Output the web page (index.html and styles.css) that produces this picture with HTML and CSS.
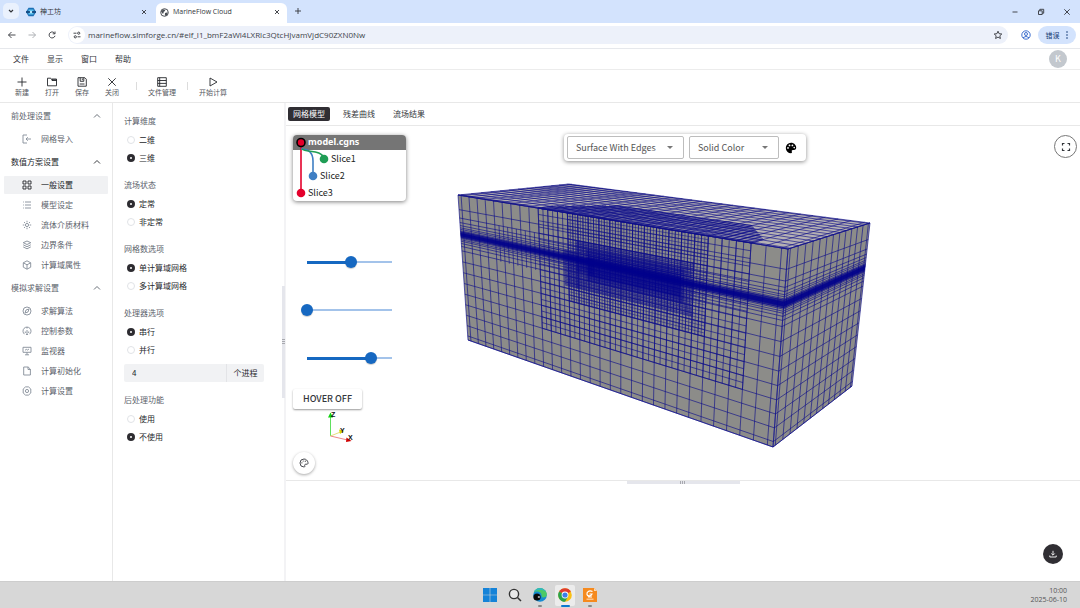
FILE: index.html
```html
<!DOCTYPE html>
<html lang="zh-CN">
<head>
<meta charset="utf-8">
<title>MarineFlow Cloud</title>
<link rel="stylesheet" href="styles.css">
</head>
<body>
<header class="browser">
  <div class="tabstrip">
    <button class="tab-search" aria-label="搜索标签页"><svg width="8" height="8" viewBox="0 0 8 8"><path d="M2 3l2 2 2-2" class="ln bold"/></svg></button>
    <div class="btab">
      <svg width="10" height="10" viewBox="0 0 10 10"><path d="M2.5 .8h5L10 5 7.500 9.200h-5L0 5z" fill="#1d6fb5"/><path d="M0 4h10v2H0z" fill="#164f86"/><path d="M2.500 2.500h5v1.500h-5zM2.500 6h5v1.500h-5z" fill="#5cc3ee"/><circle cx="5" cy="5" r="1.200" fill="#bfeaff"/></svg>
      <span class="btab-title">神工坊</span>
      <button class="x" aria-label="关闭标签页"><svg width="6" height="6" viewBox="0 0 6 6"><path d="M1 1l4 4M5 1L1 5" class="ln"/></svg></button>
    </div>
    <div class="btab active">
      <svg width="9" height="9" viewBox="0 0 9 9"><circle cx="4.500" cy="4.500" r="3.800" fill="#fff" stroke="#4b4f55"/><path d="M1 3.500l2-2 2.500.2-.8 1.600-1.200.8.300 1.200-1.500.2zM5 5l2.800-.8L7 7 4.800 8z" fill="#4b4f55"/></svg>
      <span class="btab-title">MarineFlow Cloud</span>
      <button class="x" aria-label="关闭标签页"><svg width="6" height="6" viewBox="0 0 6 6"><path d="M1 1l4 4M5 1L1 5" class="ln"/></svg></button>
    </div>
    <button class="newtab" aria-label="新标签页"><svg width="8" height="8" viewBox="0 0 8 8"><path d="M4 1v6M1 4h6" class="ln"/></svg></button>
    <div class="winctl">
      <button aria-label="最小化"><svg width="8" height="8" viewBox="0 0 8 8"><path d="M1.500 4h5" class="ln"/></svg></button>
      <button aria-label="还原"><svg width="8" height="8" viewBox="0 0 8 8"><path d="M1.500 2.800h3.700v3.700H1.500zM2.800 2.800V1.300h3.900v3.900H5.200" class="ln"/></svg></button>
      <button aria-label="关闭"><svg width="8" height="8" viewBox="0 0 8 8"><path d="M1.300 1.300l5.400 5.400M6.700 1.300L1.300 6.700" class="ln"/></svg></button>
    </div>
  </div>
  <div class="navbar">
    <button aria-label="后退"><svg width="10" height="10" viewBox="0 0 10 10"><path d="M8.500 5h-7M4.500 2l-3 3 3 3" class="ln"/></svg></button>
    <button class="dim" aria-label="前进"><svg width="10" height="10" viewBox="0 0 10 10"><path d="M1.500 5h7M5.500 2l3 3-3 3" class="ln"/></svg></button>
    <button aria-label="刷新"><svg width="10" height="10" viewBox="0 0 10 10"><path d="M7.800 3.600A3 3 0 1 0 8 5.800M8 1.500v2.300H5.700" class="ln"/></svg></button>
    <div class="omnibox">
      <button class="site" aria-label="网站信息"><svg width="8" height="8" viewBox="0 0 8 8"><path d="M.5 2.200h3M4.500 5.800h3" class="ln"/><circle cx="5.700" cy="2.200" r="1.100" class="ln"/><circle cx="2.300" cy="5.800" r="1.100" class="ln"/></svg></button>
      <input class="url" aria-label="地址" value="marineflow.simforge.cn/#elf_l1_bmF2aWl4LXRlc3QtcHJvamVjdC90ZXN0Nw">
      <button aria-label="收藏"><svg width="10" height="10" viewBox="0 0 10 10"><path d="M5 1.200l1.100 2.500 2.700.3-2 1.800.6 2.700L5 7.100 2.600 8.500l.6-2.700-2-1.800 2.700-.3z" class="ln"/></svg></button>
    </div>
    <button class="blue" aria-label="个人资料"><svg width="10" height="10" viewBox="0 0 10 10"><circle cx="5" cy="5" r="4.200" class="ln"/><circle cx="5" cy="4" r="1.500" class="ln"/><path d="M2 7.700q3-2.600 6 0" class="ln"/></svg></button>
    <button class="errpill">错误<svg width="4" height="8" viewBox="0 0 4 8"><circle cx="2" cy="1" r=".8"/><circle cx="2" cy="4" r=".8"/><circle cx="2" cy="7" r=".8"/></svg></button>
  </div>
</header>

<nav class="menubar">
  <button>文件</button><button>显示</button><button>窗口</button><button>帮助</button>
  <span class="avatar">K</span>
</nav>

<div class="toolbar">
  <div class="toolset">
    <button><svg width="12" height="12" viewBox="0 0 12 12"><path d="M6 1.500v9M1.500 6h9" class="ln"/></svg>新建</button>
    <button><svg width="12" height="12" viewBox="0 0 12 12"><path d="M1.500 2.200h3.300l1.200 1.600h4.500v6h-9zM6 3h4.500v1.500H6z" class="ln"/></svg>打开</button>
    <button><svg width="12" height="12" viewBox="0 0 12 12"><path d="M2 1.700h6.800l1.500 1.500v7H2zM4.200 1.700v3.600h3.600V1.700M6.300 2.500v1.700M3.700 8h4.800" class="ln"/></svg>保存</button>
    <button><svg width="12" height="12" viewBox="0 0 12 12"><path d="M2.300 2.300l7.400 7.400M9.700 2.300L2.300 9.700" class="ln"/></svg>关闭</button>
  </div>
  <span class="sep"></span>
  <button class="wide"><svg width="12" height="12" viewBox="0 0 12 12"><path d="M1.700 1.700h8.600v8.600H1.700zM1.700 4.500h8.600M1.700 7.400h8.600M3.700 1.700v8.600" class="ln"/></svg>文件管理</button>
  <span class="sep"></span>
  <button class="wide"><svg width="12" height="12" viewBox="0 0 12 12"><path d="M3 2l7 4-7 4z" class="ln"/></svg>开始计算</button>
</div>

<main class="workspace">
  <aside class="sidebar">
    <section class="group">
      <button class="group-head">前处理设置<svg width="8" height="8" viewBox="0 0 8 8"><path d="M1 5.500l3-3 3 3" class="ln"/></svg></button>
      <a class="item" href="#import"><svg width="10" height="10" viewBox="0 0 10 10"><path d="M5 1H1v8h4M9 5H4M5.800 3.200L4 5l1.800 1.800" class="ln"/></svg>网格导入</a>
    </section>
    <section class="group open">
      <button class="group-head">数值方案设置<svg width="8" height="8" viewBox="0 0 8 8"><path d="M1 5.500l3-3 3 3" class="ln"/></svg></button>
      <a class="item current" href="#general"><svg width="10" height="10" viewBox="0 0 10 10"><path d="M1 1h3v3H1zM6 1h3v3H6zM1 6h3v3H1zM6 6h3v3H6z" class="ln"/></svg>一般设置</a>
      <a class="item" href="#model"><svg width="10" height="10" viewBox="0 0 10 10"><path d="M3 2h6M3 5h6M3 8h6M1 2h.8M1 5h.8M1 8h.8" class="ln"/></svg>模型设定</a>
      <a class="item" href="#material"><svg width="10" height="10" viewBox="0 0 10 10"><circle cx="5" cy="5" r="1.600" class="ln"/><path d="M5 .8v1.500M5 7.700v1.500M.8 5h1.500M7.700 5h1.500M2 2l1 1M7 7l1 1M8 2L7 3M3 7L2 8" class="ln"/></svg>流体介质材料</a>
      <a class="item" href="#boundary"><svg width="10" height="10" viewBox="0 0 10 10"><path d="M5 1l3.800 1.700L5 4.500 1.200 2.700zM1.200 4.800L5 6.700l3.800-1.900M1.200 6.900L5 8.800l3.800-1.900" class="ln"/></svg>边界条件</a>
      <a class="item" href="#domain"><svg width="10" height="10" viewBox="0 0 10 10"><path d="M5 .8l3.700 2v4.400L5 9.200l-3.700-2V2.800zM1.300 2.800L5 4.800l3.700-2M5 4.800v4.400" class="ln"/></svg>计算域属性</a>
    </section>
    <section class="group">
      <button class="group-head">模拟求解设置<svg width="8" height="8" viewBox="0 0 8 8"><path d="M1 5.500l3-3 3 3" class="ln"/></svg></button>
      <a class="item" href="#algo"><svg width="10" height="10" viewBox="0 0 10 10"><circle cx="5" cy="5" r="4" class="ln"/><path d="M7 3L6 6 3 7l1-3z" class="ln"/></svg>求解算法</a>
      <a class="item" href="#control"><svg width="10" height="10" viewBox="0 0 10 10"><path d="M2.500 8.200a4 4 0 1 1 5 0M5 4v4M3.300 5.500v1.500M6.700 5.500v1.500M5 1v1.500M4 8.500h2" class="ln"/></svg>控制参数</a>
      <a class="item" href="#monitor"><svg width="10" height="10" viewBox="0 0 10 10"><path d="M1 1.300h8v5H1zM5 6.300v2.400M3 8.800h4M3 4.300l1.300-1 1 .8L7 3" class="ln"/></svg>监视器</a>
      <a class="item" href="#init"><svg width="10" height="10" viewBox="0 0 10 10"><path d="M1.700 1h4.500l2.200 2.200V9H1.700zM6 1v2.500h2.400" class="ln"/></svg>计算初始化</a>
      <a class="item" href="#run"><svg width="10" height="10" viewBox="0 0 10 10"><path d="M3.500.9h3L8.800 3v4L6.500 9.100h-3L1.200 7V3z" class="ln"/><circle cx="5" cy="5" r="1.600" class="ln"/></svg>计算设置</a>
    </section>
  </aside>

  <form class="settings">
    <fieldset><legend>计算维度</legend>
      <label><input type="radio" name="dim">二维</label>
      <label><input type="radio" name="dim" checked>三维</label></fieldset>
    <fieldset><legend>流场状态</legend>
      <label><input type="radio" name="flow" checked>定常</label>
      <label><input type="radio" name="flow">非定常</label></fieldset>
    <fieldset><legend>网格数选项</legend>
      <label><input type="radio" name="grid" checked>单计算域网格</label>
      <label><input type="radio" name="grid">多计算域网格</label></fieldset>
    <fieldset><legend>处理器选项</legend>
      <label><input type="radio" name="cpu" checked>串行</label>
      <label><input type="radio" name="cpu">并行</label>
      <div class="procs"><input id="procs" type="text" value="4"><label for="procs">个进程</label></div></fieldset>
    <fieldset><legend>后处理功能</legend>
      <label><input type="radio" name="post">使用</label>
      <label><input type="radio" name="post" checked>不使用</label></fieldset>
    <div class="vsplit"><svg width="3" height="6" viewBox="0 0 3 6"><path d="M0 .5h3M0 2.500h3M0 4.500h3" class="ln"/></svg></div>
  </form>

  <section class="content">
    <div class="tabs" role="tablist">
      <button role="tab" class="on">网格模型</button><button role="tab">残差曲线</button><button role="tab">流场结果</button>
    </div>
    <div class="viewer">
      <svg class="scene" width="795" height="354" viewBox="285 126 795 354" role="img" aria-label="网格模型"></svg>

      <div class="left-tools">
        <div class="tree">
          <div class="row root">model.cgns</div>
          <div class="row d2">Slice1</div>
          <div class="row d1">Slice2</div>
          <div class="row">Slice3</div>
          <svg class="links" width="40" height="67" viewBox="0 0 40 67" fill="none">
            <path d="M8 8v50" stroke="#e4002b" stroke-width="1.600"/>
            <path d="M8 14q12 0 12 12v15" stroke="#3f7fc4" stroke-width="1.600"/>
            <path d="M9 14c4 4 20 0 22 10" stroke="#1f9d55" stroke-width="1.600"/>
            <circle cx="8" cy="7.500" r="4" fill="#e4002b" stroke="#000" stroke-width="1.600"/>
            <circle cx="31" cy="24" r="4.300" fill="#1f9d55"/>
            <circle cx="20" cy="41" r="4.300" fill="#3f7fc4"/>
            <circle cx="8" cy="58" r="4.300" fill="#e4002b"/>
          </svg>
        </div>
        <div class="sliders">
          <input type="range" aria-label="Slice1" min="0" max="100" value="52" style="--v:.52">
          <input type="range" aria-label="Slice2" min="0" max="100" value="0" style="--v:0">
          <input type="range" aria-label="Slice3" min="0" max="100" value="75" style="--v:.75">
        </div>
        <button class="hover">HOVER OFF</button>
        <svg class="axes" width="32" height="36" viewBox="0 0 32 36">
          <path d="M5.500 27V8" stroke="#5fe05f" fill="none"/><path d="M3 8.500l2.500-5 2.500 5z" fill="#0bd40b"/>
          <path d="M5.500 27l10-4" stroke="#e6e07a" fill="none"/><path d="M14 20.500l5 1.500-4 3z" fill="#d8d800"/>
          <path d="M5.500 27l17 4" stroke="#e88" fill="none"/><path d="M21.500 28.500l5 3.500-5.500 1z" fill="#d00000"/>
          <text x="6" y="8">Z</text><text x="15" y="24">Y</text><text x="23" y="31">X</text>
        </svg>
        <button class="round" aria-label="调色板"><svg width="10" height="10" viewBox="0 0 10 10"><path d="M5 1a4 4 0 1 0 0 8c1 0 1-.8.700-1.400C5.400 6.700 6 6.200 7 6.200h1C9 6.200 9.100 5.300 9 4.600 8.700 2.500 7 1 5 1z" class="ln"/><circle cx="2.900" cy="4.800" r=".6"/><circle cx="4.200" cy="3" r=".6"/><circle cx="6.300" cy="3.200" r=".6"/></svg></button>
      </div>

      <div class="modebar">
        <span class="pick wide-pick"><select aria-label="表示方式"><option>Surface With Edges</option></select></span>
        <span class="pick"><select aria-label="着色"><option>Solid Color</option></select></span>
        <button aria-label="颜色"><svg width="12" height="12" viewBox="0 0 12 12"><path fill-rule="evenodd" d="M6 .8a5.200 5.200 0 1 0 0 10.400c1 0 1.200-.9.800-1.600C6.400 8.800 7 8 7.800 8H9c1.500 0 2.200-1 2.200-2.400C11.200 3 9 .8 6 .8zM3 5a.9.900 0 1 0 0 1.800A.9.900 0 0 0 3 5zM4.500 2.500a.9.900 0 1 0 0 1.800.9.900 0 0 0 0-1.800zM7.400 2.500a.9.900 0 1 0 0 1.800.9.900 0 0 0 0-1.800zM9.200 4.800a.8.800 0 1 0 0 1.600.8.800 0 0 0 0-1.600z"/></svg></button>
      </div>
      <button class="fullscreen" aria-label="全屏"><svg width="10" height="10" viewBox="0 0 10 10"><path d="M1.500 3.500v-2h2M6.500 1.500h2v2M8.500 6.500v2h-2M3.500 8.500h-2v-2" class="ln bold"/></svg></button>
    </div>
    <div class="lower">
      <div class="hsplit"><svg width="6" height="3" viewBox="0 0 6 3"><path d="M.5 0v3M2.500 0v3M4.500 0v3" class="ln"/></svg></div>
      <button class="download" aria-label="下载"><svg width="8" height="8" viewBox="0 0 8 8"><path d="M4 .8v4M2.300 3.500L4 5.200l1.700-1.700M.8 5.500v1.500h6.400V5.500" class="ln"/></svg></button>
    </div>
  </section>
</main>

<footer class="taskbar">
  <div class="apps">
    <button aria-label="开始"><svg width="14" height="14" viewBox="0 0 14 14"><path d="M0 0h6.700v6.700H0zM7.300 0H14v6.700H7.300zM0 7.300h6.700V14H0zM7.300 7.300H14V14H7.300z" fill="#1583d8"/></svg></button>
    <button aria-label="搜索"><svg width="14" height="14" viewBox="0 0 14 14"><circle cx="6" cy="6" r="4.600" fill="#e8e8e8" stroke="#333" stroke-width="1.400"/><path d="M9.500 9.500L13 13" stroke="#333" stroke-width="1.500"/></svg></button>
    <button class="run" aria-label="Edge"><svg width="14" height="14" viewBox="0 0 14 14"><circle cx="7" cy="7" r="6.800" fill="#168bd2"/><path d="M.8 5C2-1 11-2 13.700 5c.6 3-1 4.500-3.500 4.500C8 9.500 9 7 8 5.500 6 3 2.500 3 .8 5z" fill="#4cc965"/><path d="M1 4.500C3-1 10-1.500 13 4 9 1 4 1 1 4.500z" fill="#30b8c0"/><circle cx="4" cy="9" r="3.600" fill="#080808"/><path d="M4.500 9l2-1.300v2.600z" fill="#fff"/></svg></button>
    <button class="front" aria-label="Chrome"><svg width="14" height="14" viewBox="0 0 14 14"><circle cx="7" cy="7" r="6.800" fill="#f9bf13"/><path d="M7 7L1.100 3.600a6.800 6.800 0 0 1 11.800 0z" fill="#df3c30"/><path d="M7 7L1.100 3.600A6.800 6.800 0 0 0 7 13.800L10 8.700z" fill="#2ba24c"/><circle cx="7" cy="7" r="3.400" fill="#fff"/><circle cx="7" cy="7" r="2.600" fill="#3b7de9"/></svg></button>
    <button class="run" aria-label="Foxit"><svg width="14" height="14" viewBox="0 0 14 14"><path d="M0 0h11l3 3v11H0z" fill="#f58a1f"/><path d="M11 0l3 3h-3z" fill="#ffd9ae"/><path d="M9.500 3.500C6 1.800 3.500 4 4 6.500c.5 2 4 2 5-.5H6.500M5 9h4" fill="none" stroke="#fff" stroke-width="1.200"/><path d="M3.500 10.500h7v1.500h-7z" fill="#ffc58c"/></svg></button>
  </div>
  <div class="clock"><span>10:00</span><span>2025-06-10</span></div>
</footer>
<script src="mesh.js"></script>
</body>
</html>
```
FILE: styles.css
```css
* { box-sizing: border-box; }
body {
  margin: 0; min-height: 100vh; display: flex; flex-direction: column;
  font: 8px/12px "Noto Sans CJK SC", "Noto Sans", sans-serif;
  color: #33363b; background: #fff;
}
button { border: 0; background: none; padding: 0; margin: 0; font: inherit; color: inherit; display: flex; align-items: center; justify-content: center; }
input, select { font: inherit; color: inherit; border: 0; padding: 0; margin: 0; background: none; outline: 0; }
svg { display: block; flex: none; }
.ln { fill: none; stroke: currentColor; stroke-width: .9; }
.ln.bold { stroke-width: 1.2; }

/* browser chrome */
.tabstrip { height: 23px; background: #d3e3fd; display: flex; align-items: flex-end; padding-left: 3px; }
.tab-search { width: 16px; height: 16px; border-radius: 5px; background: #eaf1fd; margin: 0 4px 4px 0; }
.btab { width: 131px; height: 20px; display: flex; align-items: center; gap: 4px; padding: 0 7px 2px 3px; font-size: 7px; }
.btab.active { background: #fff; border-radius: 6px 6px 0 0; margin-left: 2px; padding-left: 4px; }
.btab-title { flex: 1; font-family: "Open Sans", "Noto Sans CJK SC", sans-serif; }
.newtab { height: 16px; margin: 0 7px 4px; }
.winctl { margin-left: auto; display: flex; gap: 18px; height: 23px; padding-right: 9px; }
.navbar { height: 26px; padding: 3px 4px 4px 7px; display: flex; align-items: center; gap: 10px; border-bottom: 1px solid #e6e8ec; }
.dim { color: #a5a8ad; }
.omnibox { flex: 1; height: 18px; margin-left: 1px; background: #edf1fa; border-radius: 9px; display: flex; align-items: center; padding: 0 5px 0 1px; }
.navbar .blue { color: #2b62c9; margin: 0 -3px 0 3px; }
.site { width: 16px; height: 16px; border-radius: 50%; background: #fff; }
.url { flex: 1; margin-left: 3px; font: 8px/12px "Open Sans", sans-serif; color: #40444a; }
.errpill { width: 38px; height: 18px; border-radius: 9px; background: #d3e3fd; color: #143a75; font-size: 7px; gap: 5px; }
.errpill svg { fill: currentColor; }

.menubar { height: 21px; padding: 0 13px; display: flex; align-items: center; gap: 18px; border-bottom: 1px solid #ececec; }
.avatar { margin-left: auto; width: 18px; height: 18px; border-radius: 50%; background: #c3c8ce; color: #fff; text-align: center; font-size: 9px; line-height: 18px; }
.toolbar { height: 33px; padding: 0 7px; display: flex; align-items: center; border-bottom: 1px solid #e8e8e8; font-size: 7px; line-height: 9px; }
.toolset { display: flex; padding-right: 4px; }
.toolbar button { flex-direction: column; width: 30px; color: #55585e; }
.toolbar button.wide { width: 40px; }
.toolbar svg { color: #25272b; }
.sep { width: 1px; height: 8px; margin: 0 5px; background: #dcdcdc; }

/* workspace */
.workspace { flex: 1; display: flex; }
.sidebar { flex: none; width: 113px; padding: 1px 4px; border-right: 1px solid #e8e8e8; color: #5b626b; }
.group { margin-bottom: 2px; display: flex; flex-direction: column; gap: 2px; }
.group-head { height: 24px; padding: 0 7px; justify-content: space-between; }
.group.open .group-head { color: #25272b; }
.item { height: 18px; padding-left: 18px; display: flex; align-items: center; gap: 9px; color: inherit; text-decoration: none; }
.item svg { color: #858d98; }
.item.current, .item.current svg { color: #25272b; }
.item.current { background: #f0f1f3; border-radius: 1px; }
.settings { flex: none; width: 173px; padding: 9px 20px 0 11px; position: relative; border-right: 2px solid #f3f3f5; }
fieldset { border: 0; padding: 0; margin: 0 0 9px; min-width: 0; }
legend { padding: 0; height: 16px; margin-bottom: 3px; line-height: 17px; color: #5b626b; }
fieldset > label { height: 18px; display: flex; align-items: center; gap: 4px; padding-left: 3px; color: #25272b; }
input[type=radio] { appearance: none; width: 8px; height: 8px; border: 1px solid #e1e3e7; border-radius: 50%; background: #fff; }
input[type=radio]:checked { border: 3px solid #2d2c31; }
.procs { margin-top: 5px; height: 18px; display: flex; background: #f1f2f4; border-radius: 2px; color: #25272b; }
.procs input { flex: 1; min-width: 0; padding-left: 8px; }
.procs label { width: 38px; border-left: 1px solid #e3e4e7; text-align: center; line-height: 18px; }
.vsplit { position: absolute; right: -1px; top: 183px; width: 3px; height: 112px; background: #e5e6ec; display: flex; align-items: center; color: #a0a2a8; }
.content { flex: 1; min-width: 0; display: flex; flex-direction: column; }
.tabs { height: 23px; padding: 0 2px; display: flex; align-items: center; gap: 8px; border-bottom: 1px solid #e8e8e8; }
.tabs button { height: 14px; padding: 0 5px; border-radius: 2px; }
.tabs .on { background: #302e33; color: #fff; }

/* viewer */
.viewer { position: relative; overflow: hidden; }
.scene .top { fill: #b5b1b3; }
.scene .side { fill: #8c8c89; }
.scene .wire { fill: none; stroke: #10108a; stroke-width: .65; }
.scene .core { fill: #00008b; }
.left-tools { position: absolute; left: 7px; top: 9px; width: 113px; display: flex; flex-direction: column; align-items: flex-start; }
.tree { position: relative; width: 113px; border-radius: 4px; background: #fff; box-shadow: 0 1px 4px rgba(0,0,0,.5); font-size: 9px; line-height: 17px; color: #222; }
.row { padding-left: 15px; }
.d1 { padding-left: 27px; }
.d2 { padding-left: 38px; }
.root { height: 15px; line-height: 14px; border-radius: 4px 4px 0 0; background: #757575; color: #fff; font-family: "Noto Sans", sans-serif; font-weight: 700; }
.links { position: absolute; left: 0; top: 0; }
.sliders { display: flex; flex-direction: column; gap: 36px; margin: 55px 0 25px 8px; }
input[type=range] { appearance: none; width: 97px; height: 12px; }
input[type=range]::-webkit-slider-runnable-track {
  height: 12px;
  background:
    linear-gradient(#1668c1, #1668c1) 6px 50% / calc((100% - 12px) * var(--v)) 3px no-repeat,
    linear-gradient(#a3c3ea, #a3c3ea) 6px 50% / calc(100% - 12px) 2px no-repeat;
}
input[type=range]::-webkit-slider-thumb { appearance: none; width: 12px; height: 12px; border-radius: 50%; background: #1668c1; box-shadow: 0 1px 1px rgba(0,0,0,.2); }
.hover { height: 20px; padding: 0 10px; border-radius: 2px; background: #fff; box-shadow: 0 1px 2px rgba(0,0,0,.4); font-size: 9px; font-weight: 500; }
.axes { margin-left: 32px; }
.axes text { font: 700 7px "Liberation Sans", sans-serif; fill: #111; }
.round { width: 22px; height: 22px; margin-top: 7px; border-radius: 50%; background: #fff; box-shadow: 0 1px 3px rgba(0,0,0,.35); }
.round svg { fill: #333; }
.modebar { position: absolute; left: 278px; top: 8px; height: 27px; padding: 2px 9px 2px 3px; display: flex; align-items: center; gap: 5px; background: #fff; border-radius: 4px; box-shadow: 0 1px 4px rgba(0,0,0,.45); font-size: 9px; color: #555; }
.modebar button { color: #222; margin-left: 1px; }
.pick { position: relative; width: 90px; height: 23px; }
.wide-pick { width: 117px; }
.pick select { appearance: none; width: 100%; height: 100%; padding-left: 8px; border: 1px solid #bdbdbd; border-radius: 2px; }
.pick::after { content: ""; position: absolute; right: 11px; top: 10px; border: 3px solid transparent; border-top-color: #777; border-bottom: 0; }
.fullscreen { position: absolute; right: 3px; top: 9px; width: 23px; height: 23px; border: 1px solid #777; border-radius: 50%; }
.lower { flex: 1; position: relative; border-top: 1px solid #e8e8e8; }
.hsplit { width: 113px; height: 3px; margin: 0 auto; background: #e5e6ec; display: flex; justify-content: center; color: #a0a2a8; }
.download { position: absolute; right: 17px; bottom: 17px; width: 20px; height: 20px; border-radius: 50%; background: #302e33; color: #fff; }

.taskbar { position: relative; height: 27px; background: #d7d7d7; border-top: 1px solid #cdcdcd; display: flex; align-items: center; justify-content: center; }
.apps { display: flex; gap: 5px; }
.apps button { position: relative; width: 20px; height: 21px; }
.apps .front { background: #ececec; border-radius: 2px; }
.apps .front::after, .apps .run::after { content: ""; position: absolute; left: 8px; bottom: -1px; width: 4px; height: 2px; border-radius: 1px; background: #888; }
.apps .front::after { left: 6px; width: 9px; background: #0a78cf; }
.clock { position: absolute; right: 13px; top: 4px; display: flex; flex-direction: column; align-items: flex-end; font: 7px/9px "Open Sans", sans-serif; color: #555; }
```
FILE: mesh.js
```javascript
const scene = document.querySelector('.scene');
const NS = 'http://www.w3.org/2000/svg';

// Projective map of the unit square onto the quad a(0,0) b(1,0) c(1,1) d(0,1)
function quad(a, b, c, d) {
  const dx1 = b[0] - c[0], dx2 = d[0] - c[0], sx = a[0] - b[0] + c[0] - d[0];
  const dy1 = b[1] - c[1], dy2 = d[1] - c[1], sy = a[1] - b[1] + c[1] - d[1];
  const det = dx1 * dy2 - dx2 * dy1;
  const g = (sx * dy2 - dx2 * sy) / det, h = (dx1 * sy - sx * dy1) / det;
  return (u, v) => {
    const w = g * u + h * v + 1;
    const x = ((b[0] - a[0] + g * b[0]) * u + (d[0] - a[0] + h * d[0]) * v + a[0]) / w;
    const y = ((b[1] - a[1] + g * b[1]) * u + (d[1] - a[1] + h * d[1]) * v + a[1]) / w;
    return x.toFixed(2) + ' ' + y.toFixed(2);
  };
}
function add(d, cls, opacity) {
  const p = document.createElementNS(NS, 'path');
  p.setAttribute('d', d);
  p.setAttribute('class', cls);
  if (opacity) p.setAttribute('opacity', opacity);
  scene.append(p);
}
const seg = (m, u0, v0, u1, v1) => `M${m(u0, v0)}L${m(u1, v1)}`;
const box = (m, u0, v0, u1, v1) => `M${m(u0, v0)}L${m(u1, v0)}L${m(u1, v1)}L${m(u0, v1)}Z`;
function grid(m, u0, v0, u1, v1, nu, nv) {
  let d = '';
  for (let i = 0; i <= nu; i++) { const u = u0 + (u1 - u0) * i / nu; d += seg(m, u, v0, u, v1); }
  for (let j = 0; j <= nv; j++) { const v = v0 + (v1 - v0) * j / nv; d += seg(m, u0, v, u1, v); }
  return d;
}

const frontFace = quad([457, 195], [787, 249], [772, 447], [467, 340]);
const rightFace = quad([787, 249], [869, 223], [851, 386], [772, 447]);
const topFace = quad([457, 195], [568, 184], [869, 223], [787, 249]);
const col = k => (0.4 + k) / 29.8;
const rows = [0, .095, .15, .18, .2, .215, .225, .235, .242, .248, .254, .26, .266, .272, .278, .285, .295, .305, .32, .34, .37,
  .445, .52, .595, .67, .745, .82, .895, .97, 1];

add(box(topFace, 0, 0, 1, 1), 'top');
add(box(frontFace, 0, 0, 1, 1), 'side');
add(box(rightFace, 0, 0, 1, 1), 'side');

// front face: base cells, then nested refinement boxes
let d = box(frontFace, 0, 0, 1, 1);
for (let k = 0; k < 30; k++) d += seg(frontFace, col(k), 0, col(k), 1);
for (const v of rows) d += seg(frontFace, 0, v, 1, v);
for (let k = 4; k < 9; k++) d += seg(frontFace, col(k + .5), .15, col(k + .5), .38);
d += grid(frontFace, col(9), 0, col(27), .745, 36, 20);
add(d, 'wire');
add(grid(frontFace, col(12), 0, col(24), .52, 48, 28), 'wire', '.8');
add(grid(frontFace, col(12.8), .15, col(23), .43, 82, 30), 'wire', '.75');
add(grid(frontFace, col(11.6), .22, col(13), .43, 12, 22), 'wire', '.75');
add(box(frontFace, col(13.8), .19, col(22.3), .37), 'core', '.4');
add(box(frontFace, col(12.8), .24, col(14.5), .33), 'core', '.4');
add(box(frontFace, col(14), .23, col(22), .34), 'core', '.45');
add(box(frontFace, 0, .238, 1, .282), 'core', '.6');
add(box(frontFace, 0, .249, 1, .272), 'core', '.75');

// right face
d = box(rightFace, 0, 0, 1, 1);
for (let k = 0; k < 13; k++) d += seg(rightFace, (.3 + k) / 12.6, 0, (.3 + k) / 12.6, 1);
for (const v of rows) d += seg(rightFace, 0, v, 1, v);
add(d, 'wire');
add(box(rightFace, 0, .238, 1, .282), 'core', '.6');
add(box(rightFace, 0, .249, 1, .272), 'core', '.75');

// top face: u is the depth, v runs along the long edge
d = box(topFace, 0, 0, 1, 1);
for (let k = 0; k < 30; k++) d += seg(topFace, 0, col(k), 1, col(k));
for (let k = 0; k < 13; k++) d += seg(topFace, (.3 + k) / 12.6, 0, (.3 + k) / 12.6, 1);
add(d, 'wire');
d = '';
for (let k = 9; k <= 27; k += .5) {
  const depth = Math.min(.42, .12 + (k - 9) * .1, .12 + (27 - k) * .1);
  d += seg(topFace, 0, col(k), depth, col(k));
}
for (let j = 0; j < 13; j++) {
  const u = j * .035, inset = Math.max(0, (u - .12) * 10);
  d += seg(topFace, u, col(9 + inset), u, col(27 - inset));
}
add(d, 'wire');
```
